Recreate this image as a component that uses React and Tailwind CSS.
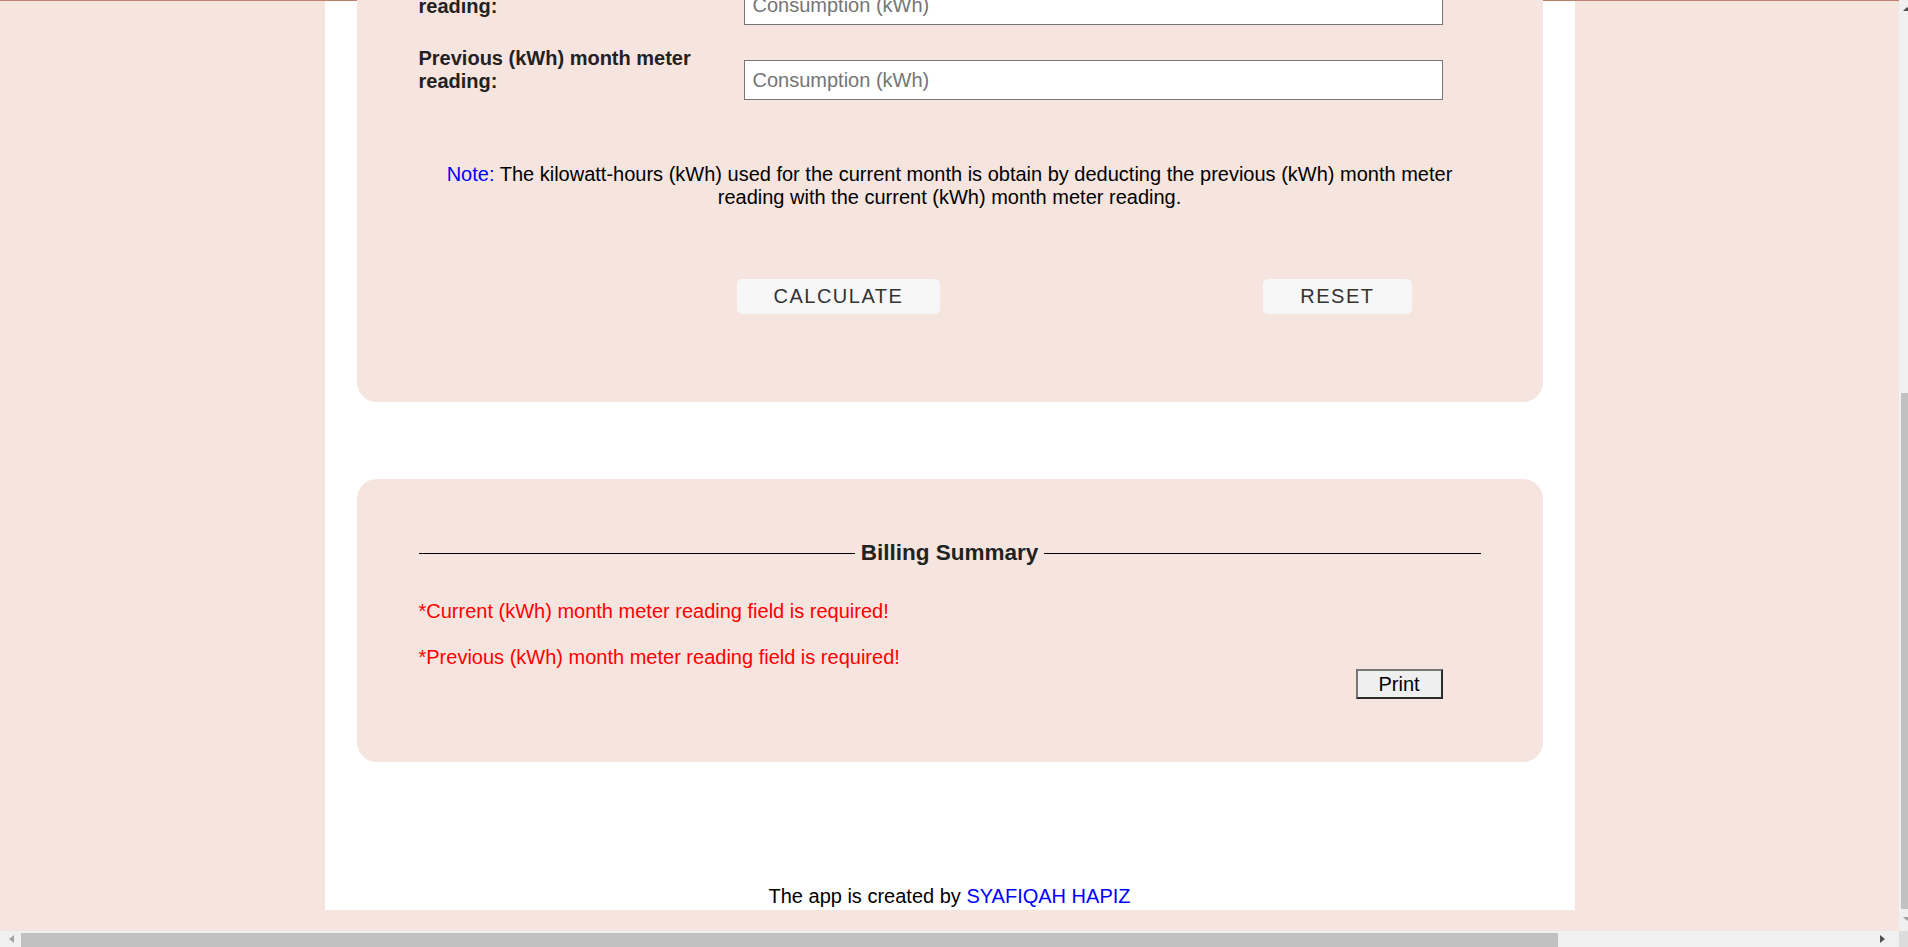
import { useState } from "react";

const Triangle = ({ className }) => <div className={`w-0 h-0 ${className}`} />;

const MeterRow = ({ label, value, onChange }) => (
  <div className="flex items-start">
    <label className="w-[325px] shrink-0 pr-4 font-bold text-[20px] leading-[23px] text-[#222]">
      {label}
    </label>
    <input
      type="number"
      value={value}
      onChange={(e) => onChange(e.target.value)}
      placeholder="Consumption (kWh)"
      className="mt-[13px] w-[699px] h-[40px] bg-white border border-[#767676] px-[8px] text-[20px] text-black placeholder:text-[#757575] outline-none"
    />
  </div>
);

const App = () => {
  const [current, setCurrent] = useState("");
  const [previous, setPrevious] = useState("");

  const reset = () => {
    setCurrent("");
    setPrevious("");
  };

  return (
    <div className="h-screen w-full overflow-hidden flex flex-col bg-[#f6e4df] font-['Liberation_Sans',Arial,sans-serif]">
      <div className="flex flex-1 min-h-0">
        {/* Page viewport (scrolled down) */}
        <div className="flex-1 min-w-0 flex flex-col overflow-hidden">
          <div className="h-px shrink-0 bg-[#c0806b]" />
          <div className="w-[1250px] shrink-0 mx-auto bg-white px-[32px] pb-[2px] flex flex-col">
            {/* Input card */}
            <div className="-mt-[29px] bg-[#f6e4df] rounded-b-[20px] px-[62px] pb-[88px] flex flex-col">
              <div className="flex flex-col gap-[22px]">
                <MeterRow
                  label="Current (kWh) month meter reading:"
                  value={current}
                  onChange={setCurrent}
                />
                <MeterRow
                  label="Previous (kWh) month meter reading:"
                  value={previous}
                  onChange={setPrevious}
                />
              </div>

              <p className="mt-[63px] text-center text-[20px] leading-[23px] text-black">
                <span className="text-[#0000ff]">Note:</span> The kilowatt-hours
                (kWh) used for the current month is obtain by deducting the
                previous (kWh) month meter reading with the current (kWh) month
                meter reading.
              </p>

              <div className="mt-[70px] flex ml-[318px] gap-[323px]">
                <button className="h-[35px] px-[37px] rounded-[5px] bg-[#f7f7f7] text-[20px] leading-[23px] tracking-[1.5px] text-[#333]">
                  CALCULATE
                </button>
                <button
                  onClick={reset}
                  className="h-[35px] px-[37px] rounded-[5px] bg-[#f7f7f7] text-[20px] leading-[23px] tracking-[1.5px] text-[#333]"
                >
                  RESET
                </button>
              </div>
            </div>

            {/* Billing summary card */}
            <div className="mt-[77px] bg-[#f6e4df] rounded-[20px] px-[62px] pt-[61px] pb-[63px] flex flex-col">
              <div className="flex items-center gap-[6px]">
                <div className="flex-1 h-px bg-black" />
                <h3 className="font-bold text-[22.5px] leading-[26px] text-[#222]">
                  Billing Summary
                </h3>
                <div className="flex-1 h-px bg-black" />
              </div>
              <p className="mt-[34px] text-[20px] leading-[23px] text-[#ff0000]">
                *Current (kWh) month meter reading field is required!
              </p>
              <p className="mt-[23px] text-[20px] leading-[23px] text-[#ff0000]">
                *Previous (kWh) month meter reading field is required!
              </p>
              <div className="flex justify-end pr-[38px]">
                <button className="w-[87px] h-[30px] border-2 border-t-[#767676] border-l-[#767676] border-b-[#2b2b2b] border-r-[#2b2b2b] bg-[#efefef] text-[20px] leading-[23px] text-black">
                  Print
                </button>
              </div>
            </div>

            {/* Footer */}
            <footer className="mt-[123px] text-center text-[20px] leading-[23px] text-black">
              The app is created by{" "}
              <span className="text-[#0000ff]">SYAFIQAH HAPIZ</span>
            </footer>
          </div>
        </div>

        {/* Vertical scrollbar */}
        <div className="w-[9px] shrink-0 bg-[#f0f0f0] flex flex-col">
          <div className="h-[17px] flex items-center justify-end">
            <Triangle className="border-x-[4px] border-x-transparent border-b-[4px] border-b-[#505050] -mr-[3px]" />
          </div>
          <div className="flex-1" />
          <div className="h-[516px] ml-[2px] bg-[#c1c1c1]" />
          <div className="h-[22px] flex items-start justify-end pt-[8px]">
            <Triangle className="border-x-[4px] border-x-transparent border-t-[4px] border-t-[#a3a3a3] -mr-[3px]" />
          </div>
        </div>
      </div>

      {/* Horizontal scrollbar */}
      <div className="h-[16px] shrink-0 flex bg-[#f0f0f0]">
        <div className="w-[21px] flex items-center justify-center pl-[1px]">
          <Triangle className="border-y-[4px] border-y-transparent border-r-[5px] border-r-[#a3a3a3]" />
        </div>
        <div className="flex-1 flex">
          <div className="w-[1537px] mt-[2px] bg-[#c1c1c1]" />
          <div className="flex-1" />
          <div className="w-[22px] flex items-center justify-start pl-[3px]">
            <Triangle className="border-y-[4px] border-y-transparent border-l-[5px] border-l-[#505050]" />
          </div>
        </div>
        <div className="w-[9px] bg-[#dcdcdc]" />
      </div>
    </div>
  );
};

export default App;
